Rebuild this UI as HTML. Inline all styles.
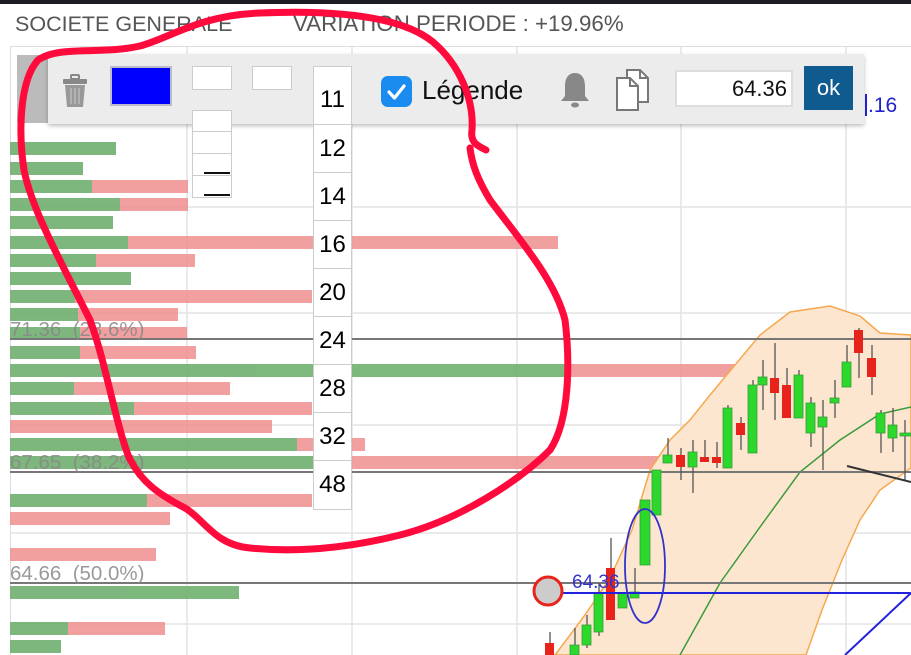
<!DOCTYPE html>
<html><head><meta charset="utf-8"><style>
body{margin:0;width:911px;height:655px;overflow:hidden;background:#fff;font-family:"Liberation Sans",sans-serif;position:relative}
.a{position:absolute}
</style></head><body>
<svg class="a" style="left:0;top:0" width="911" height="655" viewBox="0 0 911 655">
<rect x="0" y="0" width="911" height="4" fill="#1c1c24"/>
<text x="15" y="31" font-size="21.5" fill="#555" font-family="Liberation Sans">SOCIETE GENERALE</text>
<text x="293" y="31" font-size="22.3" fill="#555" font-family="Liberation Sans">VARIATION PERIODE : +19.96%</text>
<rect x="10.5" y="46.5" width="910" height="620" fill="none" stroke="#ddd"/>
<g stroke="#e4e4e4" stroke-width="1.5">
<line x1="187" y1="47" x2="187" y2="655"/><line x1="352" y1="47" x2="352" y2="655"/>
<line x1="517" y1="47" x2="517" y2="655"/><line x1="681" y1="47" x2="681" y2="655"/>
<line x1="846" y1="47" x2="846" y2="655"/>
<line x1="10" y1="207" x2="911" y2="207"/><line x1="10" y1="313" x2="911" y2="313"/>
<line x1="10" y1="425" x2="911" y2="425"/><line x1="10" y1="533" x2="911" y2="533"/>
<line x1="10" y1="624" x2="911" y2="624"/>
</g>
<g fill="#ef8f8f" opacity="0.85">
<rect x="92" y="180" width="96" height="13"/><rect x="120" y="198" width="68" height="13"/>
<rect x="128" y="236" width="430" height="13"/><rect x="96" y="254" width="99" height="13"/>
<rect x="75" y="290" width="237" height="13"/><rect x="78" y="308" width="100" height="13"/>
<rect x="80" y="327" width="107" height="13"/><rect x="80" y="346" width="116" height="13"/>
<rect x="565" y="364" width="170" height="13"/><rect x="74" y="382" width="156" height="13"/>
<rect x="134" y="402" width="178" height="13"/><rect x="10" y="420" width="262" height="13"/>
<rect x="297" y="438" width="68" height="13"/><rect x="352" y="456" width="405" height="13"/>
<rect x="147" y="494" width="165" height="13"/><rect x="10" y="512" width="160" height="13"/>
<rect x="10" y="548" width="146" height="13"/><rect x="68" y="622" width="97" height="13"/>
</g>
<g fill="#6fb06f" opacity="0.9">
<rect x="10" y="142" width="106" height="13"/><rect x="10" y="162" width="73" height="13"/>
<rect x="10" y="180" width="82" height="13"/><rect x="10" y="198" width="110" height="13"/>
<rect x="10" y="216" width="103" height="13"/><rect x="10" y="236" width="118" height="13"/>
<rect x="10" y="254" width="86" height="13"/><rect x="10" y="272" width="121" height="13"/>
<rect x="10" y="290" width="65" height="13"/><rect x="10" y="308" width="68" height="13"/>
<rect x="10" y="327" width="70" height="13"/><rect x="10" y="346" width="70" height="13"/>
<rect x="10" y="364" width="555" height="13"/><rect x="10" y="382" width="64" height="13"/>
<rect x="10" y="402" width="124" height="13"/><rect x="10" y="438" width="287" height="13"/>
<rect x="10" y="456" width="342" height="13"/><rect x="10" y="494" width="137" height="13"/>
<rect x="10" y="586" width="229" height="13"/><rect x="10" y="622" width="58" height="13"/>
<rect x="10" y="640" width="51" height="13"/>
</g>
<polygon points="555,655 585,615 610,578 632,530 650,470 670,440 690,420 710,395 735,365 760,335 790,312 830,306 860,316 880,333 911,335 911,468 880,490 860,520 842,560 822,610 806,655" fill="#fde6cf" stroke="#f5a84e" stroke-width="1.5"/>
<polyline points="680,655 720,583 760,527 800,472 840,440 880,414 911,407" fill="none" stroke="#3a9a3a" stroke-width="1.5"/>
<g stroke="#777" stroke-width="2"><line x1="10" y1="339" x2="911" y2="339"/><line x1="10" y1="472" x2="911" y2="472"/><line x1="10" y1="583" x2="911" y2="583"/></g>
<g fill="#888" font-size="20.5" font-family="Liberation Sans" opacity="0.85" style="white-space:pre">
<text x="10" y="336" xml:space="preserve">71.36  (23.6%)</text><text x="10" y="469" xml:space="preserve">67.65  (38.2%)</text><text x="10" y="580" xml:space="preserve">64.66  (50.0%)</text></g>
<g stroke="#555" stroke-width="1.3">
<line x1="550" y1="632" x2="550" y2="655"/><line x1="575" y1="628" x2="575" y2="655"/><line x1="587" y1="615" x2="587" y2="648"/><line x1="599" y1="583" x2="599" y2="636"/><line x1="611" y1="538" x2="611" y2="620"/><line x1="635" y1="568" x2="635" y2="598"/><line x1="668" y1="438" x2="668" y2="463"/><line x1="681" y1="448" x2="681" y2="480"/><line x1="693" y1="440" x2="693" y2="493"/><line x1="705" y1="440" x2="705" y2="462"/><line x1="717" y1="442" x2="717" y2="468"/><line x1="728" y1="405" x2="728" y2="468"/><line x1="741" y1="417" x2="741" y2="450"/><line x1="753" y1="380" x2="753" y2="453"/><line x1="763" y1="360" x2="763" y2="410"/><line x1="775" y1="343" x2="775" y2="420"/><line x1="787" y1="368" x2="787" y2="418"/><line x1="799" y1="370" x2="799" y2="418"/><line x1="811" y1="397" x2="811" y2="447"/><line x1="823" y1="400" x2="823" y2="470"/><line x1="835" y1="380" x2="835" y2="418"/><line x1="847" y1="345" x2="847" y2="387"/><line x1="859" y1="328" x2="859" y2="378"/><line x1="872" y1="345" x2="872" y2="395"/><line x1="881" y1="410" x2="881" y2="453"/><line x1="893" y1="408" x2="893" y2="452"/><line x1="905" y1="420" x2="905" y2="480"/>
</g>
<g fill="#2bd82b" stroke="#3a9a3a" stroke-width="0.8">
<rect x="570" y="645" width="9" height="10"/><rect x="582" y="625" width="9" height="20"/><rect x="594" y="593" width="9" height="39"/><rect x="618" y="593" width="9" height="15"/><rect x="630" y="592" width="9" height="6"/><rect x="640" y="500" width="10" height="65"/><rect x="652" y="470" width="9" height="45"/><rect x="663" y="455" width="9" height="8"/><rect x="688" y="452" width="9" height="15"/><rect x="723" y="408" width="9" height="60"/><rect x="748" y="385" width="9" height="68"/><rect x="758" y="377" width="9" height="8"/><rect x="794" y="375" width="9" height="43"/><rect x="806" y="403" width="9" height="30"/><rect x="818" y="417" width="9" height="10"/><rect x="830" y="398" width="9" height="5"/><rect x="842" y="362" width="9" height="25"/><rect x="876" y="413" width="9" height="20"/><rect x="888" y="425" width="9" height="13"/><rect x="900" y="433" width="11" height="3"/>
</g>
<g fill="#e8231c">
<rect x="545" y="643" width="9" height="12"/><rect x="606" y="568" width="9" height="52"/><rect x="676" y="455" width="9" height="12"/><rect x="700" y="457" width="9" height="5"/><rect x="712" y="457" width="9" height="6"/><rect x="736" y="423" width="9" height="12"/><rect x="770" y="378" width="9" height="15"/><rect x="782" y="385" width="9" height="33"/><rect x="854" y="330" width="9" height="23"/><rect x="867" y="358" width="9" height="19"/>
</g>
<line x1="847" y1="466" x2="911" y2="482" stroke="#333" stroke-width="2"/>
<line x1="562" y1="593" x2="911" y2="593" stroke="#2222dd" stroke-width="2"/>
<line x1="845" y1="655" x2="911" y2="593" stroke="#2222dd" stroke-width="2"/>
<ellipse cx="645" cy="566" rx="20" ry="57" fill="none" stroke="#3333cc" stroke-width="1.8"/>
<text x="572" y="588" font-size="19" fill="#3333cc" font-family="Liberation Sans">64.36</text>
<circle cx="548" cy="591" r="14" fill="#ccc" stroke="#e8231c" stroke-width="3"/>
</svg>

<div class="a" style="left:17px;top:55px;width:32px;height:68px;background:#bbb"></div>
<div class="a" style="left:48px;top:54px;width:816px;height:70px;background:#ececec;box-shadow:0 2px 4px rgba(0,0,0,.25)"></div>
<svg class="a" style="left:62px;top:74px" width="26" height="34" viewBox="0 0 26 34">
<rect x="9" y="1" width="8" height="4" rx="1" fill="none" stroke="#888" stroke-width="2"/>
<rect x="1" y="5" width="24" height="5" rx="1" fill="#888"/>
<path d="M3 11 H23 L21 33 H5 Z" fill="#999"/>
<g stroke="#bbb" stroke-width="1.5"><line x1="9" y1="14" x2="9" y2="30"/><line x1="13" y1="14" x2="13" y2="30"/><line x1="17" y1="14" x2="17" y2="30"/></g>
</svg>
<div class="a" style="left:110px;top:66px;width:58px;height:36px;background:#00f;border:2px solid #bbc"></div>
<div class="a" style="left:192px;top:66px;width:38px;height:22px;background:#fff;border:1px solid #ccc"></div>
<div class="a" style="left:252px;top:66px;width:38px;height:22px;background:#fff;border:1px solid #ccc"></div>
<div class="a" style="left:192px;top:110px;width:38px;height:86px;background:#fff;border:1px solid #ccc"></div>
<div class="a" style="left:192px;top:131px;width:40px;height:1px;background:#ccc"></div>
<div class="a" style="left:192px;top:153px;width:40px;height:1px;background:#ccc"></div>
<div class="a" style="left:192px;top:175px;width:40px;height:1px;background:#ccc"></div>
<div class="a" style="left:204px;top:172px;width:26px;height:2px;background:#111"></div>
<div class="a" style="left:204px;top:194px;width:26px;height:2px;background:#111"></div>

<div class="a" style="left:313px;top:66px;width:37px;height:442px;background:#fff;border:1px solid #ccc"></div>
<div class="a" style="left:313px;top:66px;font-size:24px;color:#000;line-height:48px;width:39px;text-align:center">
<div style="padding-top:10px;border-bottom:1px solid #ccc;height:48px">11</div>
<div style="border-bottom:1px solid #ccc;height:47px">12</div>
<div style="border-bottom:1px solid #ccc;height:47px">14</div>
<div style="border-bottom:1px solid #ccc;height:47px">16</div>
<div style="border-bottom:1px solid #ccc;height:47px">20</div>
<div style="border-bottom:1px solid #ccc;height:47px">24</div>
<div style="border-bottom:1px solid #ccc;height:47px">28</div>
<div style="border-bottom:1px solid #ccc;height:47px">32</div>
<div style="height:47px">48</div>
</div>

<div class="a" style="left:381px;top:76px;width:31px;height:31px;background:#1a8cf0;border-radius:7px"></div>
<svg class="a" style="left:381px;top:76px" width="31" height="31"><path d="M8 16 L13.5 22 L23 10" fill="none" stroke="#fff" stroke-width="3.2" stroke-linecap="round" stroke-linejoin="round"/></svg>
<div class="a" style="left:422px;top:75px;font-size:26px;color:#111">Légende</div>
<svg class="a" style="left:559px;top:70px" width="32" height="40" viewBox="0 0 32 40">
<path d="M16 3 C9 3 6 9 6 16 V26 L2 31 H30 L26 26 V16 C26 9 23 3 16 3Z" fill="#888"/>
<ellipse cx="16" cy="35" rx="4" ry="2.5" fill="#888"/></svg>
<svg class="a" style="left:613px;top:68px" width="40" height="44" viewBox="0 0 40 44">
<path d="M14 2 H27 L35 10 V34 H14 Z" fill="#fff" stroke="#777" stroke-width="2"/>
<path d="M27 2 V10 H35" fill="none" stroke="#777" stroke-width="2"/>
<path d="M4 10 H17 L25 18 V42 H4 Z" fill="#fff" stroke="#777" stroke-width="2"/>
<path d="M17 10 V18 H25" fill="none" stroke="#777" stroke-width="2"/></svg>
<div class="a" style="left:675px;top:70px;width:110px;height:33px;background:#fff;border:2px solid #ddd;font-size:22px;text-align:right;padding-right:4px;line-height:34px;color:#111">64.36</div>
<div class="a" style="left:804px;top:66px;width:49px;height:44px;background:#0f5a8e;color:#fff;font-size:22px;text-align:center;line-height:44px">ok</div>
<div class="a" style="left:868px;top:94px;font-size:21px;color:#2222cc">.16</div>
<div class="a" style="left:865px;top:94px;width:2px;height:22px;background:#2222cc"></div>

<svg class="a" style="left:0;top:0" width="911" height="655">
<path d="M486 150 C478 146 470 143 472 130 C474 100 460 65 433 42 C400 15 330 10 260 13 C200 15 170 38 140 46 C100 55 60 45 38 60 C20 80 18 130 24 170 C32 210 60 260 90 320 C105 360 115 420 128 455 C140 482 160 495 185 508 C205 520 215 545 250 548 C290 552 340 550 400 535 C460 520 520 480 550 450 C570 420 570 360 565 320 C555 280 520 240 490 200 C478 180 472 165 470 148" fill="none" stroke="#ff0a3c" stroke-width="7" stroke-linecap="round" stroke-linejoin="round"/>
</svg>
</body></html>
